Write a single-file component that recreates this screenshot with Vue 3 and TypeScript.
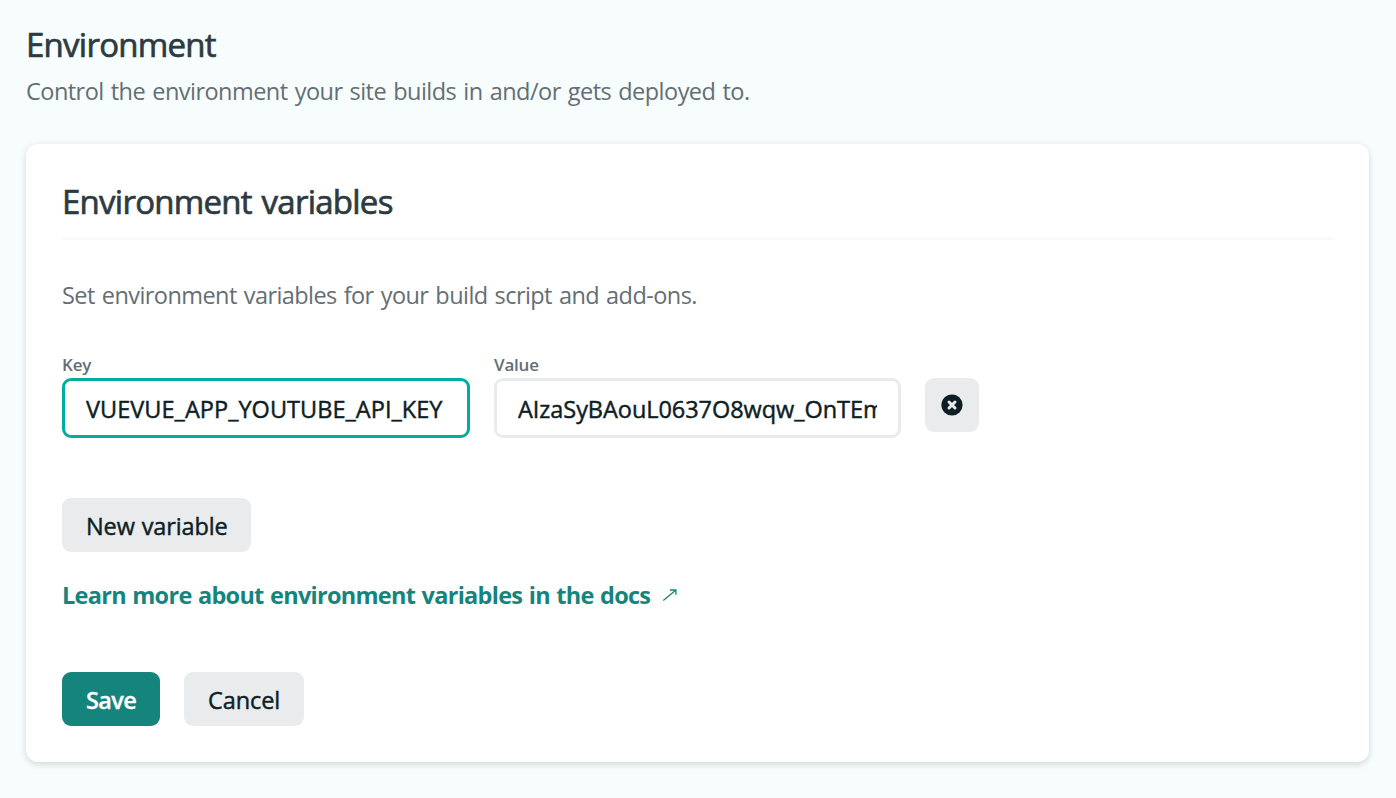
<script setup lang="ts">
import { ref } from 'vue'

const keyName = ref<string>('VUEVUE_APP_YOUTUBE_API_KEY')
const keyValue = ref<string>('AIzaSyBAouL0637O8wqw_OnTEm')
</script>

<template>
  <main class="page">
    <header class="intro">
      <h1 class="title"><span class="t-title">Environment</span></h1>
      <p class="lead"><span class="t-lead">Control the environment your site builds in and/or gets deployed to.</span></p>
    </header>
    <section class="card">
      <h2 class="card-title"><span class="t-card">Environment variables</span></h2>
      <p class="lead card-lead"><span class="t-set">Set environment variables for your build script and add-ons.</span></p>
      <div class="row">
        <div class="field key">
          <span class="label">Key</span>
          <div class="box active"><span class="clip t-key">{{ keyName }}</span></div>
        </div>
        <div class="field value">
          <span class="label">Value</span>
          <div class="box"><span class="clip t-val">{{ keyValue }}</span></div>
        </div>
        <button class="btn remove" type="button" aria-label="Remove">
          <svg width="22" height="22" viewBox="0 0 22 22">
            <circle cx="11" cy="11" r="10.6" fill="#0e1e25" />
            <path d="M8 8l6 6M14 8l-6 6" stroke="#e9ebec" stroke-width="3" stroke-linecap="round" />
          </svg>
        </button>
      </div>
      <button class="btn new" type="button"><span class="t-new">New variable</span></button>
      <a class="docs">
        <span class="t-docs">Learn more about environment variables in the docs</span>
        <svg class="arrow" width="16" height="14" viewBox="0 0 16 14">
          <path d="M1.3 12.6L13.3 2.4M8 2h5.9v4.8" fill="none" stroke="#15847d" stroke-width="1.3" />
        </svg>
      </a>
      <div class="actions">
        <button class="btn save" type="button"><span class="t-save">Save</span></button>
        <button class="btn cancel" type="button"><span class="t-cancel">Cancel</span></button>
      </div>
    </section>
  </main>
</template>

<style>
body {
  background: #f7fdfd;
}
</style>

<style scoped>
.page {
  box-sizing: border-box;
  height: 798px;
  padding: 24px 27px 36px 26px;
  background: #f7fdfd;
  color: #0e1e25;
  font-family: 'Open Sans', 'Noto Sans', sans-serif;
  font-size: 23.5px;
  white-space: nowrap;
  overflow: hidden;
  display: flex;
  flex-direction: column;
}
.intro {
  height: 120px;
}
.title,
.card-title {
  margin: 0;
  font-size: 33px;
  line-height: 44px;
  font-weight: 500;
  color: #2d3b41;
  -webkit-text-stroke: 0.7px currentColor;
}
.title {
  line-height: 42px;
}
.lead {
  margin: 7px 0 0;
  line-height: 36px;
  color: #646e73;
}
.card {
  box-sizing: border-box;
  flex: 1;
  padding: 36px 35px 36px 36px;
  border-radius: 12px;
  background: #fff;
  box-shadow: 0 3px 6px rgba(14, 30, 37, 0.12), 0 0 9px rgba(14, 30, 37, 0.05);
  display: flex;
  flex-direction: column;
  align-items: flex-start;
}
.card-title {
  box-sizing: border-box;
  width: 100%;
  height: 60px;
  border-bottom: 3px solid #f9fafa;
}
.card-lead {
  margin: 37px 0 0;
}
.row {
  display: flex;
  align-items: flex-end;
  gap: 24px;
  margin-top: 41px;
}
.field {
  display: flex;
  flex-direction: column;
}
.key {
  width: 408px;
}
.value {
  width: 407px;
}
.label {
  height: 24px;
  font-size: 17px;
  line-height: 22px;
  font-weight: 600;
  color: #646e73;
  letter-spacing: -0.2px;
}
.box {
  box-sizing: border-box;
  height: 60px;
  padding: 2px 21px 0;
  border: 3px solid #e9ebec;
  border-radius: 9px;
  display: flex;
  align-items: center;
}
.box.active {
  border-color: #00ad9f;
}
.clip {
  width: 100%;
  overflow: hidden;
  line-height: 36px;
  -webkit-text-stroke: 0.45px currentColor;
}
.btn {
  height: 54px;
  padding: 0 24px;
  border: 0;
  border-radius: 9px;
  background: #e9ebec;
  color: #0e1e25;
  font: inherit;
  display: flex;
  align-items: center;
}
.btn span {
  padding-top: 2px;
  -webkit-text-stroke: 0.45px currentColor;
}
.remove {
  width: 54px;
  padding: 0 16px;
  margin-bottom: 6px;
}
.new {
  width: 189px;
  margin-top: 60px;
}
.docs {
  display: flex;
  align-items: center;
  gap: 12px;
  margin-top: 25px;
  line-height: 36px;
  font-weight: 700;
  color: #15847d;
}
.actions {
  display: flex;
  gap: 24px;
  margin-top: 59px;
}
.btn.save {
  width: 98px;
  background: #15847d;
  color: #fff;
  font-weight: 600;
}
.btn.save span {
  -webkit-text-stroke: 0.3px currentColor;
}
.cancel {
  width: 120px;
}
.t-title { letter-spacing: -0.75px; }
.t-card { letter-spacing: -0.75px; word-spacing: 2px; }
.t-lead { letter-spacing: -0.53px; word-spacing: 1.5px; }
.t-set { letter-spacing: -0.57px; word-spacing: 1.5px; }
.t-key { letter-spacing: 0.03px; }
.t-val { letter-spacing: -0.05px; }
.t-new { letter-spacing: -0.12px; word-spacing: 1px; }
.t-docs { letter-spacing: -0.72px; word-spacing: 1px; }
.t-save { letter-spacing: -0.6px; }
.t-cancel { letter-spacing: -0.1px; }
</style>
